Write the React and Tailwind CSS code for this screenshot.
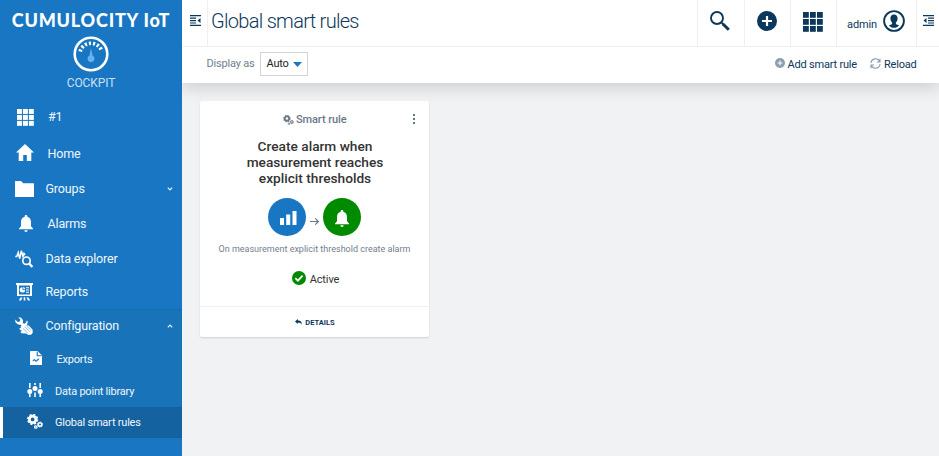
import React from 'react';

function Svg({ className = '', box = '0 0 24 24', children }) {
  return (
    <svg className={`block shrink-0 ${className}`} viewBox={box} fill="currentColor" aria-hidden="true">
      {children}
    </svg>
  );
}

function GridIcon({ className }) {
  return (
    <Svg className={className} box="0 0 20 20">
      {[0, 7, 14].map((y) => [0, 7, 14].map((x) => <rect key={`${x}-${y}`} x={x} y={y} width="5.8" height="5.8" />))}
    </Svg>
  );
}

function HomeIcon({ className }) {
  return (
    <Svg className={className} box="0 0 18 17">
      <path d="M9 0 18 8.5H15.3V17H10.8V11H7.2V17H2.7V8.5H0Z" />
    </Svg>
  );
}

function FolderIcon({ className }) {
  return (
    <Svg className={className} box="0 0 19 16">
      <path d="M0 .6Q0 0 .6 0H6L8.2 2.2H18.4Q19 2.2 19 2.8V16H0Z" />
    </Svg>
  );
}

function BellIcon({ className }) {
  return (
    <Svg className={className} box="0 0 14 17">
      <path d="M5.7 1.2a1.3 1.3 0 0 1 2.6 0v.5C10.7 2.3 12 4.3 12 7v4.2l2 2.2v.9H0v-.9l2-2.2V7c0-2.7 1.300-4.700 3.700-5.300ZM5.300 15.200h3.400a1.700 1.700 0 0 1-3.400 0Z" />
    </Svg>
  );
}

function ExplorerIcon({ className }) {
  return (
    <Svg className={className} box="0 0 18 18">
      <g fill="none" stroke="currentColor">
        <path d="M.3 6.500H1.800L3.200 2.500 4.700 8.500 6.300 .8 8 6.500 9 3.500 10 5" strokeWidth="1.500" />
        <circle cx="11.500" cy="10.700" r="3.700" strokeWidth="1.700" />
        <path d="M14 13.400 17.400 17" strokeWidth="2.400" />
      </g>
    </Svg>
  );
}

function ReportsIcon({ className }) {
  return (
    <Svg className={className} box="0 0 17 18">
      <path fillRule="evenodd" d="M0 0H17V2H16V13H1V2H0ZM3 2.500V11.500H14V2.500Z" />
      <path d="M6.500 4.200A2.700 2.700 0 1 0 9.100 7H6.500ZM7.300 3.700V6.200H9.100A2.500 2.500 0 0 0 7.300 3.700ZM10 4.200h3v1h-3zM10 6.500h3v1h-3zM10 8.800h3v1h-3z" />
      <path d="M7.700 14.300H9.300V17.500H7.700ZM4.500 14.500H6.500L5 17.500H2.800ZM10.500 14.500H12.500L14.200 17.500H12Z" />
    </Svg>
  );
}

function ToolsIcon({ className }) {
  return (
    <Svg className={className} box="0 0 18 18">
      <path d="M3.200.3 6.200.8 8 3.200 7.800 5.600 9 7 11 5.500 11.500 3.800 12.700 4 12.500 6.500 11.500 8.500 13.500 8.300 17.500 12.500 17.800 15.500 16.500 17.500 13.500 18 11 16.500 6.500 16.300 5.300 14.800 7 14 4.500 12.300 4.600 11 6 11 5.500 9.500 6.800 9 5.500 7.700 3 7.500.4 5.300.2 2.600 2.700 4.900 4.900 4.400 5.300 2.500Z" />
      <path d="M8 11.500 12.700 16M9.500 9.700 14.600 14.600M11.600 9 15.800 13" fill="none" stroke="#1873b9" strokeWidth=".5" />
    </Svg>
  );
}

function ExportIcon({ className }) {
  return (
    <Svg className={className} box="0 0 12 14">
      <path d="M0 .5Q0 0 .5 0H7.500L12 4.500V13.500Q12 14 11.500 14H.5Q0 14 0 13.500Z" />
      <path d="M7.200.8V4.800H11.500M2.800 9.800 4.500 8.700 6 10.200 9 7.800" fill="none" stroke="#1873b9" strokeWidth="1.100" />
    </Svg>
  );
}

function SlidersIcon({ className }) {
  return (
    <Svg className={className} box="0 0 16 14">
      <path d="M2 0h1.600v5H2zM2 11h1.600v3H2zM7.200 0h1.600v2H7.200zM7.200 9.500h1.600V14H7.200zM12.400 0H14v5h-1.600zM12.400 11H14v3h-1.600z" />
      <circle cx="2.800" cy="8.500" r="2.500" />
      <circle cx="8" cy="5.500" r="2.500" />
      <circle cx="13.200" cy="8.500" r="2.500" />
    </Svg>
  );
}

function GearsIcon({ className }) {
  return (
    <Svg className={className} box="0 0 16 15">
      <g fill="none" stroke="currentColor">
        <circle cx="5.600" cy="5.400" r="3.300" strokeWidth="2.800" />
        <circle cx="5.600" cy="5.400" r="4.800" strokeWidth="1.600" strokeDasharray="2.100 1.670" />
        <circle cx="13" cy="10.500" r="1.800" strokeWidth="1.600" />
        <circle cx="13" cy="10.500" r="2.600" strokeWidth=".8" strokeDasharray="1.042 1" />
        <circle cx="8.800" cy="13" r="1.200" strokeWidth="1.300" />
      </g>
    </Svg>
  );
}

function GaugeIcon({ className }) {
  return (
    <Svg className={className} box="0 0 36 36">
      <circle cx="18" cy="18" r="16.300" fill="none" stroke="#fff" strokeWidth="2.600" />
      <path d="M7.200 15.500A11.200 11.200 0 0 1 28.800 15.500" fill="none" stroke="#fff" strokeWidth="3.700" strokeDasharray="2.100 2.040" />
      <path d="M18 12.300 19.500 19.500A3.500 3.500 0 1 1 16.500 19.500Z" fill="#66b2ee" />
    </Svg>
  );
}

function OutdentIcon({ className, flip }) {
  return (
    <Svg className={className} box="0 0 11 11">
      {flip ? (
        <path d="M0 0H11V1.300H0ZM5 2.500H11V3.700H5ZM5 5H11V6.200H5ZM5 7.400H11V8.600H5ZM0 9.700H11V11H0ZM3.500 3V8L.5 5.500Z" />
      ) : (
        <path d="M0 0H11V1.300H0ZM0 2.500H6V3.700H0ZM0 5H6V6.200H0ZM0 7.400H6V8.600H0ZM0 9.700H11V11H0ZM10.500 3V8L7.500 5.500Z" />
      )}
    </Svg>
  );
}

function PlusCircleIcon({ className }) {
  return (
    <Svg className={className} box="0 0 20 20">
      <path fillRule="evenodd" d="M10 0a10 10 0 1 0 0 20a10 10 0 0 0 0-20ZM8.900 5H11.100V8.900H15V11.100H11.100V15H8.900V11.100H5V8.900H8.900Z" />
    </Svg>
  );
}

function NavItem({ icon, label, className, labelClass, chevron }) {
  return (
    <div className={`flex items-center ${className}`}>
      <span className="text-white">{icon}</span>
      <span className={`whitespace-nowrap ${labelClass}`}>{label}</span>
      {chevron && (
        <svg className="ml-auto mr-[9px] block h-[4px] w-[6px]" viewBox="0 0 6 4" fill="none" stroke="currentColor" strokeWidth="1.100">
          <path d={chevron === 'down' ? 'M.8.7 3 2.900 5.200.7' : 'M.8 3.300 3 1.100 5.200 3.300'} />
        </svg>
      )}
    </div>
  );
}

function Sidebar() {
  return (
    <aside className="flex h-full w-[182px] shrink-0 flex-col bg-[#1976c2] text-[12.5px] tracking-[-0.15px] text-[#f0f7fc]">
      <header className="flex h-[100px] flex-col items-center">
        <div className="mt-[9px] h-[22px] whitespace-nowrap font-['Lato',sans-serif] text-[18px] font-black leading-[22px] tracking-[0.8px] text-white">
          CUMULOCITY IoT
        </div>
        <GaugeIcon className="mt-[5px] h-[36px] w-[36px]" />
        <div className="mt-[3px] text-[12px] leading-[16px] tracking-[-0.1px] text-[#c9e0f3]">COCKPIT</div>
      </header>
      <nav className="flex flex-1 flex-col">
        <NavItem className="h-[34px] pl-[17px]" icon={<GridIcon className="h-[17px] w-[17px]" />} label="#1" labelClass="ml-[14px]" />
        <NavItem className="h-[37px] pl-[16px]" icon={<HomeIcon className="h-[17px] w-[18px]" />} label="Home" labelClass="ml-[13.5px] pt-[3px]" />
        <NavItem className="h-[35px] pl-[15px]" icon={<FolderIcon className="h-[16px] w-[19px]" />} label="Groups" labelClass="ml-[11.5px] pt-[2px]" chevron="down" />
        <NavItem className="h-[35px] pl-[19px]" icon={<BellIcon className="h-[17px] w-[14px]" />} label="Alarms" labelClass="ml-[14.5px] pt-[2px]" />
        <NavItem className="h-[35px] pl-[15px]" icon={<ExplorerIcon className="h-[18px] w-[18px]" />} label="Data explorer" labelClass="ml-[12.5px] pt-[2px]" />
        <NavItem className="h-[32px] pl-[16px]" icon={<ReportsIcon className="h-[18px] w-[17px]" />} label="Reports" labelClass="ml-[12.5px]" />
        <section className="mt-px flex flex-col border-t border-[#176cb3] bg-[#1873b9] text-[11px] tracking-[-0.22px]">
          <NavItem className="h-[31px] pl-[15px] text-[12.5px] tracking-[-0.15px]" icon={<ToolsIcon className="h-[18px] w-[18px]" />} label="Configuration" labelClass="ml-[12.5px] pt-[2px]" chevron="up" />
          <NavItem className="h-[35px] pl-[30px]" icon={<ExportIcon className="-mt-[2px] h-[14px] w-[12px]" />} label="Exports" labelClass="ml-[14.5px] pt-[3px]" />
          <NavItem className="h-[31px] pl-[27px]" icon={<SlidersIcon className="-mt-[3px] h-[14px] w-[16px]" />} label="Data point library" labelClass="ml-[12px] pt-[2px]" />
          <NavItem className="h-[31px] border-l-[3px] border-white bg-[#1562a0] pl-[24px]" icon={<GearsIcon className="-mt-[2px] h-[15px] w-[16px]" />} label="Global smart rules" labelClass="ml-[12px] pt-[2px]" />
        </section>
      </nav>
    </aside>
  );
}

function TopBar() {
  return (
    <header className="flex h-[47px] border-b border-[#eeeff0] text-[#0b385b]">
      <div className="flex w-[26px] border-r border-[#eeeff0] pl-[8px] pt-[15px]">
        <OutdentIcon className="h-[11px] w-[11px]" />
      </div>
      <h1 className="ml-[3px] mt-[9px] whitespace-nowrap text-[20px] font-light leading-[24px] tracking-[-0.7px]">Global smart rules</h1>
      <div className="ml-auto flex">
        <div className="w-[47px] border-l border-[#eeeff0] pl-[12px] pt-[11px]">
          <svg className="block h-[20px] w-[20px]" viewBox="0 0 20 20" fill="none" stroke="currentColor">
            <circle cx="7" cy="7" r="6" strokeWidth="1.900" />
            <path d="M11.300 11.300 13 13" strokeWidth="1.800" />
            <path d="M12.700 12.700 18.800 18.800" strokeWidth="3" />
          </svg>
        </div>
        <div className="w-[46px] border-l border-[#eeeff0] pl-[12px] pt-[11px]">
          <PlusCircleIcon className="h-[20px] w-[20px]" />
        </div>
        <div className="w-[46px] border-l border-[#eeeff0] pl-[12px] pt-[12px]">
          <GridIcon className="h-[20px] w-[20px]" />
        </div>
        <div className="flex w-[80px] border-l border-[#eeeff0] pl-[10px] pt-[10px]">
          <span className="mt-[7px] w-[30px] whitespace-nowrap text-[11px] leading-[16px] tracking-[-0.1px]">admin</span>
          <svg className="ml-[6px] block h-[22px] w-[22px]" viewBox="0 0 22 22" fill="none" stroke="currentColor">
            <circle cx="11" cy="11" r="9.900" strokeWidth="1.900" />
            <path fill="currentColor" stroke="none" d="M11 4.600C13.500 4.600 14.700 6.300 14.600 8.600 14.500 10.500 13.800 11.700 12.900 12.600V14.100C13.800 14.700 15.200 14.900 16 15.500 14.800 17.100 13 17.800 11 17.800S7.200 17.100 6 15.500C6.800 14.900 8.200 14.700 9.100 14.100V12.600C8.200 11.700 7.500 10.500 7.400 8.600 7.300 6.300 8.500 4.600 11 4.600Z" />
          </svg>
        </div>
        <div className="w-[23px] border-l border-[#eeeff0] pl-[6px] pt-[15px]">
          <OutdentIcon className="h-[11px] w-[11px]" flip />
        </div>
      </div>
    </header>
  );
}

function ActionBar() {
  return (
    <div className="flex h-[36px] pl-[24.5px] text-[11px] leading-[16px] tracking-[-0.2px]">
      <span className="mt-[9px] w-[48.5px] whitespace-nowrap text-[#73808c]">Display as</span>
      <div className="ml-[5px] mt-[5px] flex h-[24px] w-[48px] items-center border border-[#ced4d9] pl-[5.5px] text-[#222]">
        <span className="w-[22.5px]">Auto</span>
        <svg className="ml-[4px] block h-[5px] w-[9px]" viewBox="0 0 9 5">
          <path d="M0 0H9L4.500 5Z" fill="#1976c2" />
        </svg>
      </div>
      <div className="ml-auto mr-[22.5px] mt-[10px] flex text-[#0b385b]">
        <PlusCircleIcon className="mt-px h-[10px] w-[10px] text-[#8b9daf]" />
        <span className="ml-[3px]">Add smart rule</span>
        <svg className="ml-[13px] mt-px block h-[11px] w-[11px] text-[#8b9daf]" viewBox="0 0 11 11" fill="none" stroke="currentColor" strokeWidth="1.100">
          <path d="M1 5A4.500 4.500 0 0 1 9.700 3.700M10 .8V4H6.900M10 6A4.500 4.500 0 0 1 1.300 7.300M1 10.200V7H4.100" />
        </svg>
        <span className="ml-[3px]">Reload</span>
      </div>
    </div>
  );
}

function RuleCard() {
  return (
    <article className="flex h-[236px] w-[229px] flex-col rounded-[2px] bg-white shadow-[0_1px_2px_rgba(0,0,0,0.14)]">
      <div className="flex h-[36px] items-center">
        <div className="ml-[83px] mt-[2px] flex items-center text-[11px] font-medium leading-[16px] tracking-[-0.1px] text-[#6b7986]">
          <GearsIcon className="-mt-px h-[10px] w-[11px]" />
          <span className="ml-[2px] whitespace-nowrap">Smart rule</span>
        </div>
        <svg className="ml-auto mr-[14px] block h-[10px] w-[2px]" viewBox="0 0 2 10" fill="#647585">
          <path d="M0 0h2v2H0zM0 4h2v2H0zM0 8h2v2H0z" />
        </svg>
      </div>
      <h2 className="mt-px pl-px text-center text-[13.700px] font-medium leading-[16px] text-[#333]">
        Create alarm when
        <br />
        measurement reaches
        <br />
        explicit thresholds
      </h2>
      <div className="mt-[12px] flex h-[38px] justify-center">
        <div className="flex h-[38px] w-[38px] items-center justify-center rounded-full bg-[#1976c2] text-white">
          <svg className="ml-[2px] mt-[2px] block h-[14px] w-[17px]" viewBox="0 0 17 14" fill="currentColor">
            <path d="M0 7H4V14H0ZM6.200 3.500H10.200V14H6.200ZM12.500 0H16.500V14H12.500Z" />
          </svg>
        </div>
        <svg className="mx-[4px] mt-[19px] block h-[8px] w-[9px]" viewBox="0 0 9 8" fill="none" stroke="#647585" strokeWidth="1.100">
          <path d="M0 4.500H8.300M5.200 1.300 8.400 4.500 5.200 7.700" />
        </svg>
        <div className="flex h-[38px] w-[38px] items-center justify-center rounded-full bg-[#008a00] text-white">
          <BellIcon className="mt-[2px] h-[17px] w-[14px]" />
        </div>
      </div>
      <p className="mt-[6px] whitespace-nowrap text-center text-[9px] leading-[14px] text-[#73808c]">
        On measurement explicit threshold create alarm
      </p>
      <div className="mt-[15px] flex h-[16px] items-center justify-center pl-[2px] text-[11px] text-[#333]">
        <svg className="-mt-[2px] block h-[14px] w-[14px]" viewBox="0 0 14 14">
          <circle cx="7" cy="7" r="7" fill="#008a00" />
          <path d="M3.300 7.200 5.900 9.700 10.600 4.600" fill="none" stroke="#fff" strokeWidth="1.700" />
        </svg>
        <span className="ml-[4px] pt-[2px] tracking-[-0.1px]">Active</span>
      </div>
      <footer className="mt-auto flex h-[31px] items-center justify-center border-t border-[#eeeff0] pl-px pt-px text-[7.500px] font-bold text-[#0b385b]">
        <svg className="-mt-px block h-[6px] w-[7px]" viewBox="0 0 6 5" fill="currentColor">
          <path d="M2.500 0V1.200C5 1.200 6 2.500 5.700 5 5.200 3.600 4.300 3 2.500 3V4.200L0 2.100Z" />
        </svg>
        <span className="ml-[3px] pt-px">DETAILS</span>
      </footer>
    </article>
  );
}

export default function App() {
  return (
    <div className="flex h-[456px] w-[939px] overflow-hidden bg-[#f1f2f4] font-['Roboto',sans-serif]">
      <Sidebar />
      <div className="flex min-w-0 flex-1 flex-col overflow-hidden">
        <div className="bg-white shadow-[0_4px_16px_rgba(0,0,0,0.16)]">
          <TopBar />
          <ActionBar />
        </div>
        <main className="pl-[18px] pt-[18px]">
          <RuleCard />
        </main>
      </div>
    </div>
  );
}
